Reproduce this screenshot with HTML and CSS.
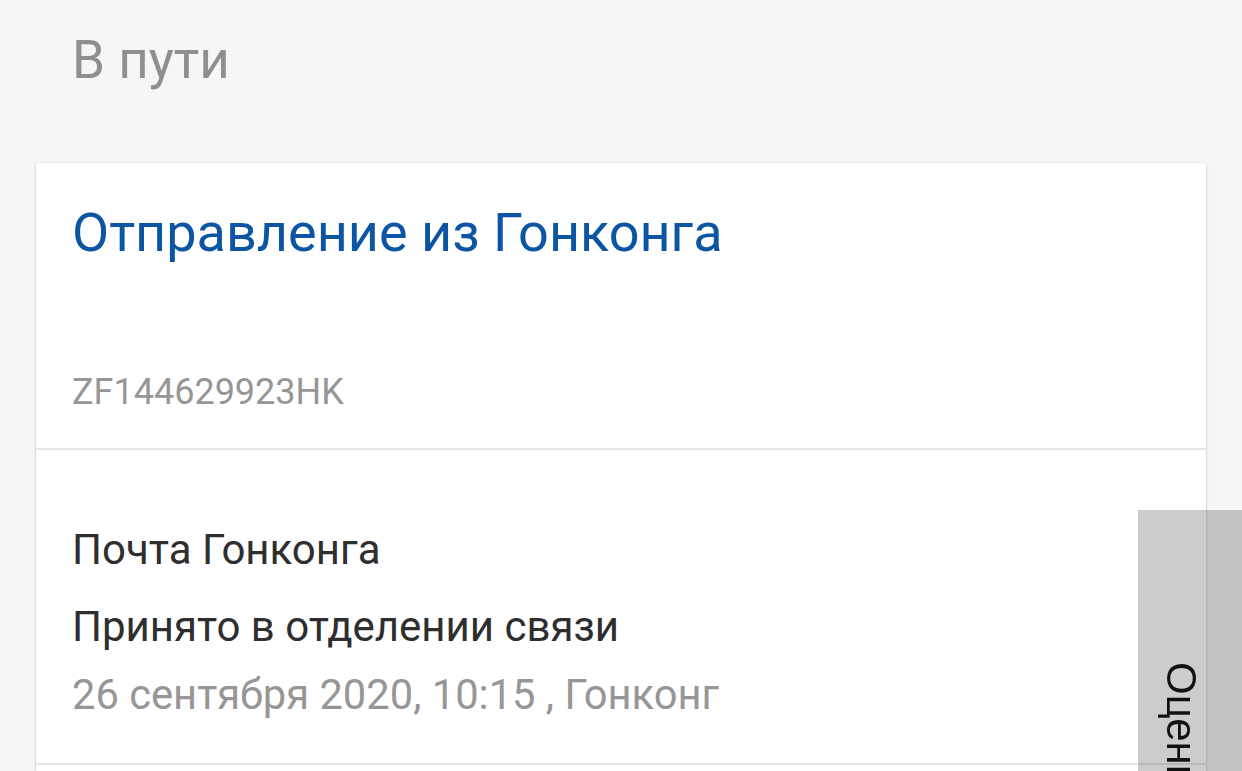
FILE: index.html
```html
<!DOCTYPE html>
<html lang="ru">
<head>
<meta charset="utf-8">
<title>В пути</title>
<link rel="stylesheet" href="styles.css">
</head>
<body>
<header class="status">В пути</header>
<main class="card">
  <section class="card-head">
    <h1 class="title">Отправление из Гонконга</h1>
    <div class="track">ZF144629923HK</div>
  </section>
  <section class="event">
    <div class="event-org">Почта Гонконга</div>
    <div class="event-name">Принято в отделении связи</div>
    <div class="event-meta">26 сентября 2020, 10:15 , Гонконг</div>
  </section>
  <section class="event event-next"></section>
</main>
<aside class="feedback-tab"><span class="feedback-text">Оцените</span></aside>
</body>
</html>
```

FILE: styles.css
```css
html, body {
  margin: 0;
  padding: 0;
}
body {
  background: #f6f6f6;
  font-family: Roboto, "Noto Sans", sans-serif;
  height: 771px;
  overflow: hidden;
}
.status {
  padding: 30px 0 0 72px;
  font-size: 53px;
  line-height: 60px;
  color: #8f8f8f;
  margin-bottom: 73px;
}
.card {
  margin-left: 36px;
  width: 1170px;
  background: #fff;
  border-radius: 3px;
  box-shadow: 0 1px 3px rgba(0,0,0,0.14), -1px 0 2px rgba(0,0,0,0.06), 1px 0 2px rgba(0,0,0,0.06);
}
.card-head {
  padding: 38px 36px 34px;
  border-bottom: 2px solid #e6e6e6;
}
.title {
  margin: 0;
  font-weight: 400;
  font-size: 54px;
  line-height: 64px;
  color: #0b55a2;
}
.track {
  margin-top: 105px;
  font-size: 36px;
  line-height: 44px;
  color: #969696;
}
.event {
  padding: 75px 36px 43px;
  border-bottom: 2px solid #e6e6e6;
}
.event-org, .event-name {
  font-size: 42px;
  line-height: 50px;
  color: #2e2e2e;
}
.event-name {
  margin-top: 27px;
}
.event-meta {
  margin-top: 18px;
  font-size: 41.7px;
  line-height: 50px;
  color: #969696;
}
.event-next {
  height: 200px;
  padding: 0;
}
.feedback-tab {
  position: fixed;
  left: 1138px;
  right: 0;
  top: 510px;
  bottom: 0;
  background: rgba(0,0,0,0.2);
}
.feedback-text {
  position: absolute;
  top: 152px;
  left: 13px;
  writing-mode: vertical-rl;
  font-family: "Liberation Sans", Arial, sans-serif;
  font-size: 42px;
  line-height: 60px;
  color: #111;
}
```
